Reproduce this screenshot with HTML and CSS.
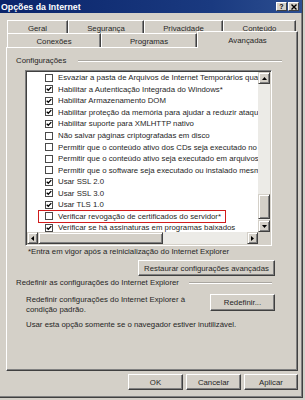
FILE: index.html
```html
<!DOCTYPE html>
<html lang="pt">
<head>
<meta charset="utf-8">
<title>Opções da Internet</title>
<link rel="stylesheet" href="styles.css">
</head>
<body>
<div class="window">
  <div class="titlebar">
    <span class="title">Opções da Internet</span>
    <div class="tb-btns">
      <span class="tb-btn">?</span>
      <span class="tb-btn"><svg width="6" height="6" viewBox="0 0 6 6"><path d="M0.5 0.5L5.5 5.5M5.5 0.5L0.5 5.5" stroke="#000" stroke-width="1.4"/></svg></span>
    </div>
  </div>
  <div class="tabs">
    <div class="tabrow row1">
      <div class="tab t-geral">Geral</div>
      <div class="tab t-seg">Segurança</div>
      <div class="tab t-priv">Privacidade</div>
      <div class="tab t-cont">Conteúdo</div>
    </div>
    <div class="tabrow row2">
      <div class="tab t-con">Conexões</div>
      <div class="tab t-prog">Programas</div>
      <div class="tab t-av active">Avançadas</div>
    </div>
  </div>
  <div class="panel">
    <div class="group-head g1"><span>Configurações</span><span class="etch"></span></div>
    <div class="listbox">
      <div class="items">
        <div class="row"><span class="item"><span class="cb"></span>Esvaziar a pasta de Arquivos de Internet Temporários qua</span></div>
        <div class="row"><span class="item"><span class="cb on"><svg viewBox="0 0 6 6"><path d="M0.7 2.7L2.3 4.3L5.3 1.1"/></svg></span>Habilitar a Autenticação Integrada do Windows*</span></div>
        <div class="row"><span class="item"><span class="cb on"><svg viewBox="0 0 6 6"><path d="M0.7 2.7L2.3 4.3L5.3 1.1"/></svg></span>Habilitar Armazenamento DOM</span></div>
        <div class="row"><span class="item"><span class="cb on"><svg viewBox="0 0 6 6"><path d="M0.7 2.7L2.3 4.3L5.3 1.1"/></svg></span>Habilitar proteção da memória para ajudar a reduzir ataqu</span></div>
        <div class="row"><span class="item"><span class="cb on"><svg viewBox="0 0 6 6"><path d="M0.7 2.7L2.3 4.3L5.3 1.1"/></svg></span>Habilitar suporte para XMLHTTP nativo</span></div>
        <div class="row"><span class="item"><span class="cb"></span>Não salvar páginas criptografadas em disco</span></div>
        <div class="row"><span class="item"><span class="cb"></span>Permitir que o conteúdo ativo dos CDs seja executado no</span></div>
        <div class="row"><span class="item"><span class="cb"></span>Permitir que o conteúdo ativo seja executado em arquivos</span></div>
        <div class="row"><span class="item"><span class="cb"></span>Permitir que o software seja executado ou instalado mesm</span></div>
        <div class="row"><span class="item"><span class="cb on"><svg viewBox="0 0 6 6"><path d="M0.7 2.7L2.3 4.3L5.3 1.1"/></svg></span>Usar SSL 2.0</span></div>
        <div class="row"><span class="item"><span class="cb on"><svg viewBox="0 0 6 6"><path d="M0.7 2.7L2.3 4.3L5.3 1.1"/></svg></span>Usar SSL 3.0</span></div>
        <div class="row"><span class="item"><span class="cb on"><svg viewBox="0 0 6 6"><path d="M0.7 2.7L2.3 4.3L5.3 1.1"/></svg></span>Usar TLS 1.0</span></div>
        <div class="row"><span class="item hl"><span class="cb"></span>Verificar revogação de certificados do servidor*</span></div>
        <div class="row"><span class="item"><span class="cb on"><svg viewBox="0 0 6 6"><path d="M0.7 2.7L2.3 4.3L5.3 1.1"/></svg></span>Verificar se há assinaturas em programas baixados</span></div>
      </div>
      <div class="vscroll">
        <div class="sb-btn"><svg width="5" height="3" viewBox="0 0 5 3"><path d="M2.5 0L5 3H0Z"/></svg></div>
        <div class="track"></div>
        <div class="thumb vthumb"></div>
        <div class="gap1"></div>
        <div class="sb-btn"><svg width="5" height="3" viewBox="0 0 5 3"><path d="M0 0H5L2.5 3Z"/></svg></div>
      </div>
      <div class="hscroll">
        <div class="sb-btn hbtn"><svg width="3" height="5" viewBox="0 0 3 5"><path d="M0 2.5L3 0V5Z"/></svg></div>
        <div class="thumb hthumb"></div>
        <div class="track"></div>
        <div class="sb-btn hbtn"><svg width="3" height="5" viewBox="0 0 3 5"><path d="M0 0L3 2.5L0 5Z"/></svg></div>
      </div>
      <div class="corner"></div>
    </div>
    <p class="note">*Entra em vigor após a reinicialização do Internet Explorer</p>
    <div class="restore-row"><button class="btn restore">Restaurar configurações avançadas</button></div>
    <div class="group-head g2"><span>Redefinir as configurações do Internet Explorer</span><span class="etch"></span></div>
    <div class="reset-row">
      <p class="reset-text">Redefinir configurações do Internet Explorer à<br>condição padrão.</p>
      <button class="btn reset">Redefinir...</button>
    </div>
    <p class="usar">Usar esta opção somente se o navegador estiver inutilizável.</p>
  </div>
  <div class="actions">
    <button class="btn act">OK</button>
    <button class="btn act">Cancelar</button>
    <button class="btn act last">Aplicar</button>
  </div>
</div>
</body>
</html>
```
FILE: styles.css
```css
html, body {
  margin: 0;
  padding: 0;
}
body {
  background: #d4d0c8;
  font-family: "Liberation Sans", Arial, sans-serif;
  font-size: 7.8px;
  color: #262626;
}
.window {
  width: 303px;
  height: 398px;
  box-sizing: border-box;
  border-right: 1px solid #404040;
  border-bottom: 1px solid #404040;
  box-shadow: inset -1px -1px 0 #808080;
  display: flex;
  flex-direction: column;
  background: #d4d0c8;
}
.titlebar {
  height: 13px;
  flex: none;
  display: flex;
  align-items: center;
  justify-content: space-between;
  padding: 0 3px 0 1px;
  background: linear-gradient(90deg, #0a246a 0%, #1a3a80 70%, #2c4e90 100%);
  color: #fff;
  font-weight: bold;
  font-size: 8.8px;
}
.tb-btns {
  display: flex;
  gap: 1px;
}
.tb-btn {
  width: 11px;
  height: 9px;
  box-sizing: border-box;
  background: #d4d0c8;
  border: 1px solid;
  border-color: #fff #404040 #404040 #fff;
  display: flex;
  align-items: center;
  justify-content: center;
  color: #000;
  font-size: 7px;
  line-height: 7px;
}
.tabs {
  margin-top: 7px;
  flex: none;
}
.tabrow {
  display: flex;
  margin-left: 7px;
}
.row1 { height: 13px; }
.row2 { height: 14px; }
.tab {
  box-sizing: border-box;
  height: 100%;
  border-top: 1px solid #fff;
  border-left: 1px solid #fff;
  border-right: 1px solid #404040;
  box-shadow: inset -1px 0 0 #808080;
  display: flex;
  align-items: center;
  justify-content: center;
  padding-top: 2px;
  flex: none;
}
.t-geral { width: 61px; }
.t-seg { width: 76px; }
.t-priv { width: 79px; }
.t-cont { width: 73px; }
.t-con { width: 94px; }
.t-prog { width: 96px; }
.t-av { width: 101px; }
.tab.active {
  height: 17px;
  margin-top: -2px;
  padding-top: 0;
  position: relative;
  z-index: 1;
  background: #d4d0c8;
}
.panel {
  flex: none;
  margin-left: 6px;
  width: 292px;
  height: 324px;
  box-sizing: border-box;
  border-top: 1px solid #fff;
  border-left: 1px solid #fff;
  border-right: 1px solid #404040;
  border-bottom: 1px solid #404040;
  box-shadow: inset -1px -1px 0 #808080;
}
.group-head {
  display: flex;
  align-items: center;
  height: 10px;
  line-height: 10px;
  white-space: nowrap;
}
.g1 { margin: 8px 15px 0 9px; }
.g1 .etch { margin-left: 12px; }
.g2 { margin: 2px 25px 0 9px; }
.g2 .etch { margin-left: 10px; }
.etch {
  flex: 1;
  height: 0;
  border-top: 1px solid #a9a6a0;
  border-bottom: 1px solid #fff;
}
.listbox {
  margin: 4px 0 0 18px;
  width: 247px;
  height: 176px;
  box-sizing: border-box;
  border: 1px solid;
  border-color: #808080 #fff #fff #808080;
  box-shadow: inset 1px 1px 0 #404040, inset -1px -1px 0 #d4d0c8;
  padding: 1px;
  background: #fff;
  display: grid;
  grid-template-columns: 1fr 12px;
  grid-template-rows: 1fr 12px;
}
.items {
  overflow: hidden;
  min-width: 0;
  min-height: 0;
}
.row {
  height: 11.55px;
  display: flex;
  align-items: center;
  padding-left: 12px;
  white-space: nowrap;
}
.item {
  flex: none;
  display: inline-flex;
  align-items: center;
  height: 100%;
  box-sizing: border-box;
  padding: 0 4px 0 6px;
  gap: 5px;
}
.item.hl {
  outline: 1.4px solid #d01c1c;
}
.cb {
  width: 8px;
  height: 8px;
  box-sizing: border-box;
  border: 1px solid #4a4a4a;
  background: #fff;
  flex: none;
  display: flex;
}
.cb svg {
  width: 6px;
  height: 6px;
}
.cb svg path {
  fill: none;
  stroke: #000;
  stroke-width: 1.3;
}
.vscroll {
  display: flex;
  flex-direction: column;
  background: #ecebe7;
}
.hscroll {
  display: flex;
  background: #ecebe7;
}
.track { flex: 1; }
.gap1 { height: 1px; flex: none; }
.sb-btn, .thumb {
  box-sizing: border-box;
  background: #d4d0c8;
  border: 1px solid;
  border-color: #d4d0c8 #404040 #404040 #d4d0c8;
  box-shadow: inset 1px 1px 0 #fff, inset -1px -1px 0 #808080;
  flex: none;
}
.sb-btn {
  height: 12px;
  display: flex;
  align-items: center;
  justify-content: center;
}
.sb-btn.hbtn {
  height: 12px;
  width: 11px;
}
.sb-btn svg path { fill: #000; }
.vthumb { height: 25px; }
.hthumb { width: 125px; }
.corner { background: #d4d0c8; }
.note {
  margin: 1px 0 0 21px;
  height: 10px;
  line-height: 10px;
}
.btn {
  font: inherit;
  color: #262626;
  background: #d4d0c8;
  border: 1px solid;
  border-color: #fff #404040 #404040 #fff;
  box-shadow: inset -1px -1px 0 #808080;
  padding: 0;
  margin: 0;
  box-sizing: border-box;
  height: 16px;
}
.restore-row {
  display: flex;
  justify-content: flex-end;
  margin: 3px 22px 0 0;
}
.restore { width: 137px; }
.reset-row {
  display: flex;
  justify-content: space-between;
  align-items: flex-start;
  margin: 6px 22px 0 19px;
}
.reset-text {
  margin: 1px 0 0 0;
  line-height: 10px;
}
.reset { width: 65px; height: 17px; }
.usar {
  margin: 5px 0 0 19px;
  line-height: 10px;
}
.actions {
  flex: none;
  display: flex;
  justify-content: flex-end;
  gap: 3px;
  margin: 3px 4px 0 0;
}
.act { width: 55px; }
.act.last { width: 54px; }
```
